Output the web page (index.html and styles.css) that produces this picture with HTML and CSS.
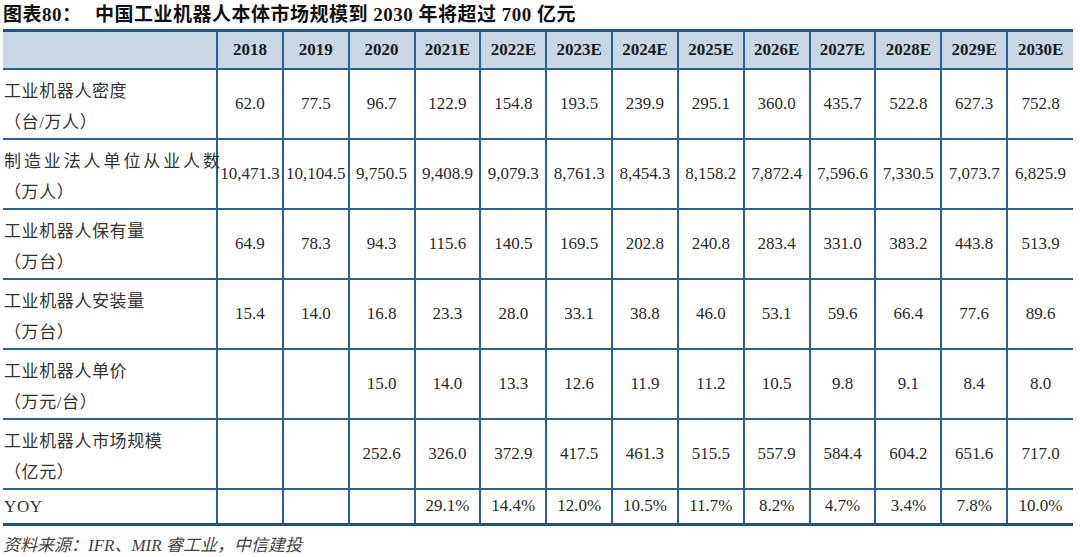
FILE: index.html
```html
<!DOCTYPE html>
<html lang="zh">
<head>
<meta charset="utf-8">
<link rel="stylesheet" href="styles.css">
</head>
<body>
<div class="page">
  <h1 class="title"><span class="fig">图表80：</span>中国工业机器人本体市场规模到 2030 年将超过 700 亿元</h1>
  <table class="data">
    <colgroup>
      <col class="c-label">
      <col span="13" class="c-year">
    </colgroup>
    <thead>
      <tr class="head">
        <th></th>
        <th>2018</th><th>2019</th><th>2020</th><th>2021E</th><th>2022E</th><th>2023E</th><th>2024E</th><th>2025E</th><th>2026E</th><th>2027E</th><th>2028E</th><th>2029E</th><th>2030E</th>
      </tr>
    </thead>
    <tbody>
      <tr class="row">
        <td class="label two"><div>工业机器人密度</div><div>（台/万人）</div></td>
        <td>62.0</td><td>77.5</td><td>96.7</td><td>122.9</td><td>154.8</td><td>193.5</td><td>239.9</td><td>295.1</td><td>360.0</td><td>435.7</td><td>522.8</td><td>627.3</td><td>752.8</td>
      </tr>
      <tr class="row">
        <td class="label two"><div class="wide">制造业法人单位从业人数</div><div>（万人）</div></td>
        <td>10,471.3</td><td>10,104.5</td><td>9,750.5</td><td>9,408.9</td><td>9,079.3</td><td>8,761.3</td><td>8,454.3</td><td>8,158.2</td><td>7,872.4</td><td>7,596.6</td><td>7,330.5</td><td>7,073.7</td><td>6,825.9</td>
      </tr>
      <tr class="row">
        <td class="label two"><div>工业机器人保有量</div><div>（万台）</div></td>
        <td>64.9</td><td>78.3</td><td>94.3</td><td>115.6</td><td>140.5</td><td>169.5</td><td>202.8</td><td>240.8</td><td>283.4</td><td>331.0</td><td>383.2</td><td>443.8</td><td>513.9</td>
      </tr>
      <tr class="row">
        <td class="label two"><div>工业机器人安装量</div><div>（万台）</div></td>
        <td>15.4</td><td>14.0</td><td>16.8</td><td>23.3</td><td>28.0</td><td>33.1</td><td>38.8</td><td>46.0</td><td>53.1</td><td>59.6</td><td>66.4</td><td>77.6</td><td>89.6</td>
      </tr>
      <tr class="row">
        <td class="label two"><div>工业机器人单价</div><div>（万元/台）</div></td>
        <td></td><td></td><td>15.0</td><td>14.0</td><td>13.3</td><td>12.6</td><td>11.9</td><td>11.2</td><td>10.5</td><td>9.8</td><td>9.1</td><td>8.4</td><td>8.0</td>
      </tr>
      <tr class="row">
        <td class="label two"><div>工业机器人市场规模</div><div>（亿元）</div></td>
        <td></td><td></td><td>252.6</td><td>326.0</td><td>372.9</td><td>417.5</td><td>461.3</td><td>515.5</td><td>557.9</td><td>584.4</td><td>604.2</td><td>651.6</td><td>717.0</td>
      </tr>
      <tr class="yoy">
        <td class="label">YOY</td>
        <td></td><td></td><td></td><td>29.1%</td><td>14.4%</td><td>12.0%</td><td>10.5%</td><td>11.7%</td><td>8.2%</td><td>4.7%</td><td>3.4%</td><td>7.8%</td><td>10.0%</td>
      </tr>
    </tbody>
  </table>
  <p class="source">资料来源：IFR、MIR 睿工业，中信建投</p>
</div>
</body>
</html>
```

FILE: styles.css
```css
html, body {
  margin: 0;
  padding: 0;
  background: #ffffff;
}

.page {
  width: 1080px;
  height: 557px;
  padding: 0 0 0 3px;
  box-sizing: border-box;
  overflow: hidden;
}

.title {
  margin: 0;
  height: 29px;
  padding-top: 4px;
  box-sizing: border-box;
  font-family: "Liberation Serif", "Noto Sans CJK SC", serif;
  font-weight: bold;
  font-size: 19px;
  line-height: 22px;
  color: #111111;
  letter-spacing: 0.5px;
  white-space: nowrap;
}

.fig {
  display: inline-block;
  width: 92px;
}

.data {
  width: 1070px;
  border-collapse: collapse;
  table-layout: fixed;
  font-family: "Liberation Serif", "Noto Sans CJK SC", serif;
  font-size: 17px;
  color: #2a2a2a;
  border-top: 3px solid #1f5586;
  border-bottom: 3px solid #1f5586;
}

.c-label {
  width: 214px;
}

.data th,
.data td {
  padding: 0;
  text-align: center;
  vertical-align: middle;
  border-left: 2px solid #2a6094;
  border-top: 2px solid #2a6094;
  white-space: nowrap;
}

.data th:first-child,
.data td:first-child {
  border-left: none;
}

.head {
  height: 38px;
  background: #c9d7e5;
}

.head th {
  font-weight: bold;
  color: #1a1a1a;
  font-size: 17px;
}

.row {
  height: 70px;
}

.yoy {
  height: 36px;
}

.data td.label {
  text-align: left;
  padding-left: 1px;
  font-family: "Liberation Serif", "Noto Sans CJK SC", serif;
  color: #333333;
  line-height: 31px;
  letter-spacing: 0.6px;
}

.data td.two {
  padding-top: 6px;
}

.wide {
  letter-spacing: 2.9px;
}

.source {
  margin: 7px 0 0 0;
  font-family: "Liberation Serif", "Noto Sans CJK SC", serif;
  font-style: italic;
  font-size: 17px;
  line-height: 26px;
  color: #444444;
}
```
